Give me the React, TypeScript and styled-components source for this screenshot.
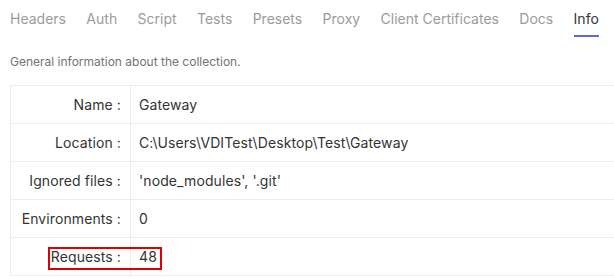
import { createGlobalStyle, styled } from "styled-components";

const GlobalStyle = createGlobalStyle`
    body {
        margin: 0;
        background: #ffffff;
        font-family: Inter, "Noto Sans", sans-serif;
        overflow: hidden;
    }
`;

const Page = styled.div`
    display: flex;
    flex-direction: column;
    width: 614px;
`;

const TabBar = styled.div`
    display: flex;
    gap: 20.4px;
    padding: 9px 0 0 10px;
    white-space: nowrap;
`;

const Tab = styled.div<{ $active?: boolean }>`
    font-size: 14px;
    line-height: 20px;
    padding-bottom: 6px;
    color: ${(p) => (p.$active ? "#343434" : "#9b9b9b")};
    border-bottom: 2px solid ${(p) => (p.$active ? "#5b6ad8" : "transparent")};
    cursor: pointer;
`;

const Caption = styled.div`
    font-size: 12px;
    color: #737373;
    padding: 17px 0 0 10px;
`;

const Table = styled.table`
    margin: 16px 0 0 10px;
    border-collapse: collapse;
    width: 620px;
    font-size: 14px;
    letter-spacing: 0.1px;
    color: #343434;
`;

const Row = styled.tr`
    height: 38px;
`;

const LabelCell = styled.td`
    position: relative;
    width: 110px;
    padding: 0 9px 0 0;
    text-align: right;
    border: 1px solid #ececec;
    white-space: nowrap;
`;

const ValueCell = styled.td`
    padding: 0 0 0 8px;
    border: 1px solid #ececec;
    white-space: nowrap;
`;

const Highlight = styled.span`
    position: absolute;
    left: 37px;
    top: 9px;
    width: 110px;
    height: 19px;
    border: 2px solid #e00000;
    pointer-events: none;
`;

const rows = [
    { label: "Name", value: "Gateway" },
    { label: "Location", value: "C:\\Users\\VDITest\\Desktop\\Test\\Gateway" },
    { label: "Ignored files", value: "'node_modules', '.git'" },
    { label: "Environments", value: "0" },
    { label: "Requests", value: "48", marked: true },
];

const tabs = ["Headers", "Auth", "Script", "Tests", "Presets", "Proxy", "Client Certificates", "Docs", "Info"];

export default function App() {
    return (
        <Page>
            <GlobalStyle />
            <TabBar>
                {tabs.map((t) => (
                    <Tab key={t} $active={t === "Info"}>
                        {t}
                    </Tab>
                ))}
            </TabBar>
            <Caption>General information about the collection.</Caption>
            <Table>
                <tbody>
                    {rows.map((r) => (
                        <Row key={r.label}>
                            <LabelCell>
                                {r.label} :
                                {r.marked && <Highlight />}
                            </LabelCell>
                            <ValueCell>{r.value}</ValueCell>
                        </Row>
                    ))}
                </tbody>
            </Table>
        </Page>
    );
}
